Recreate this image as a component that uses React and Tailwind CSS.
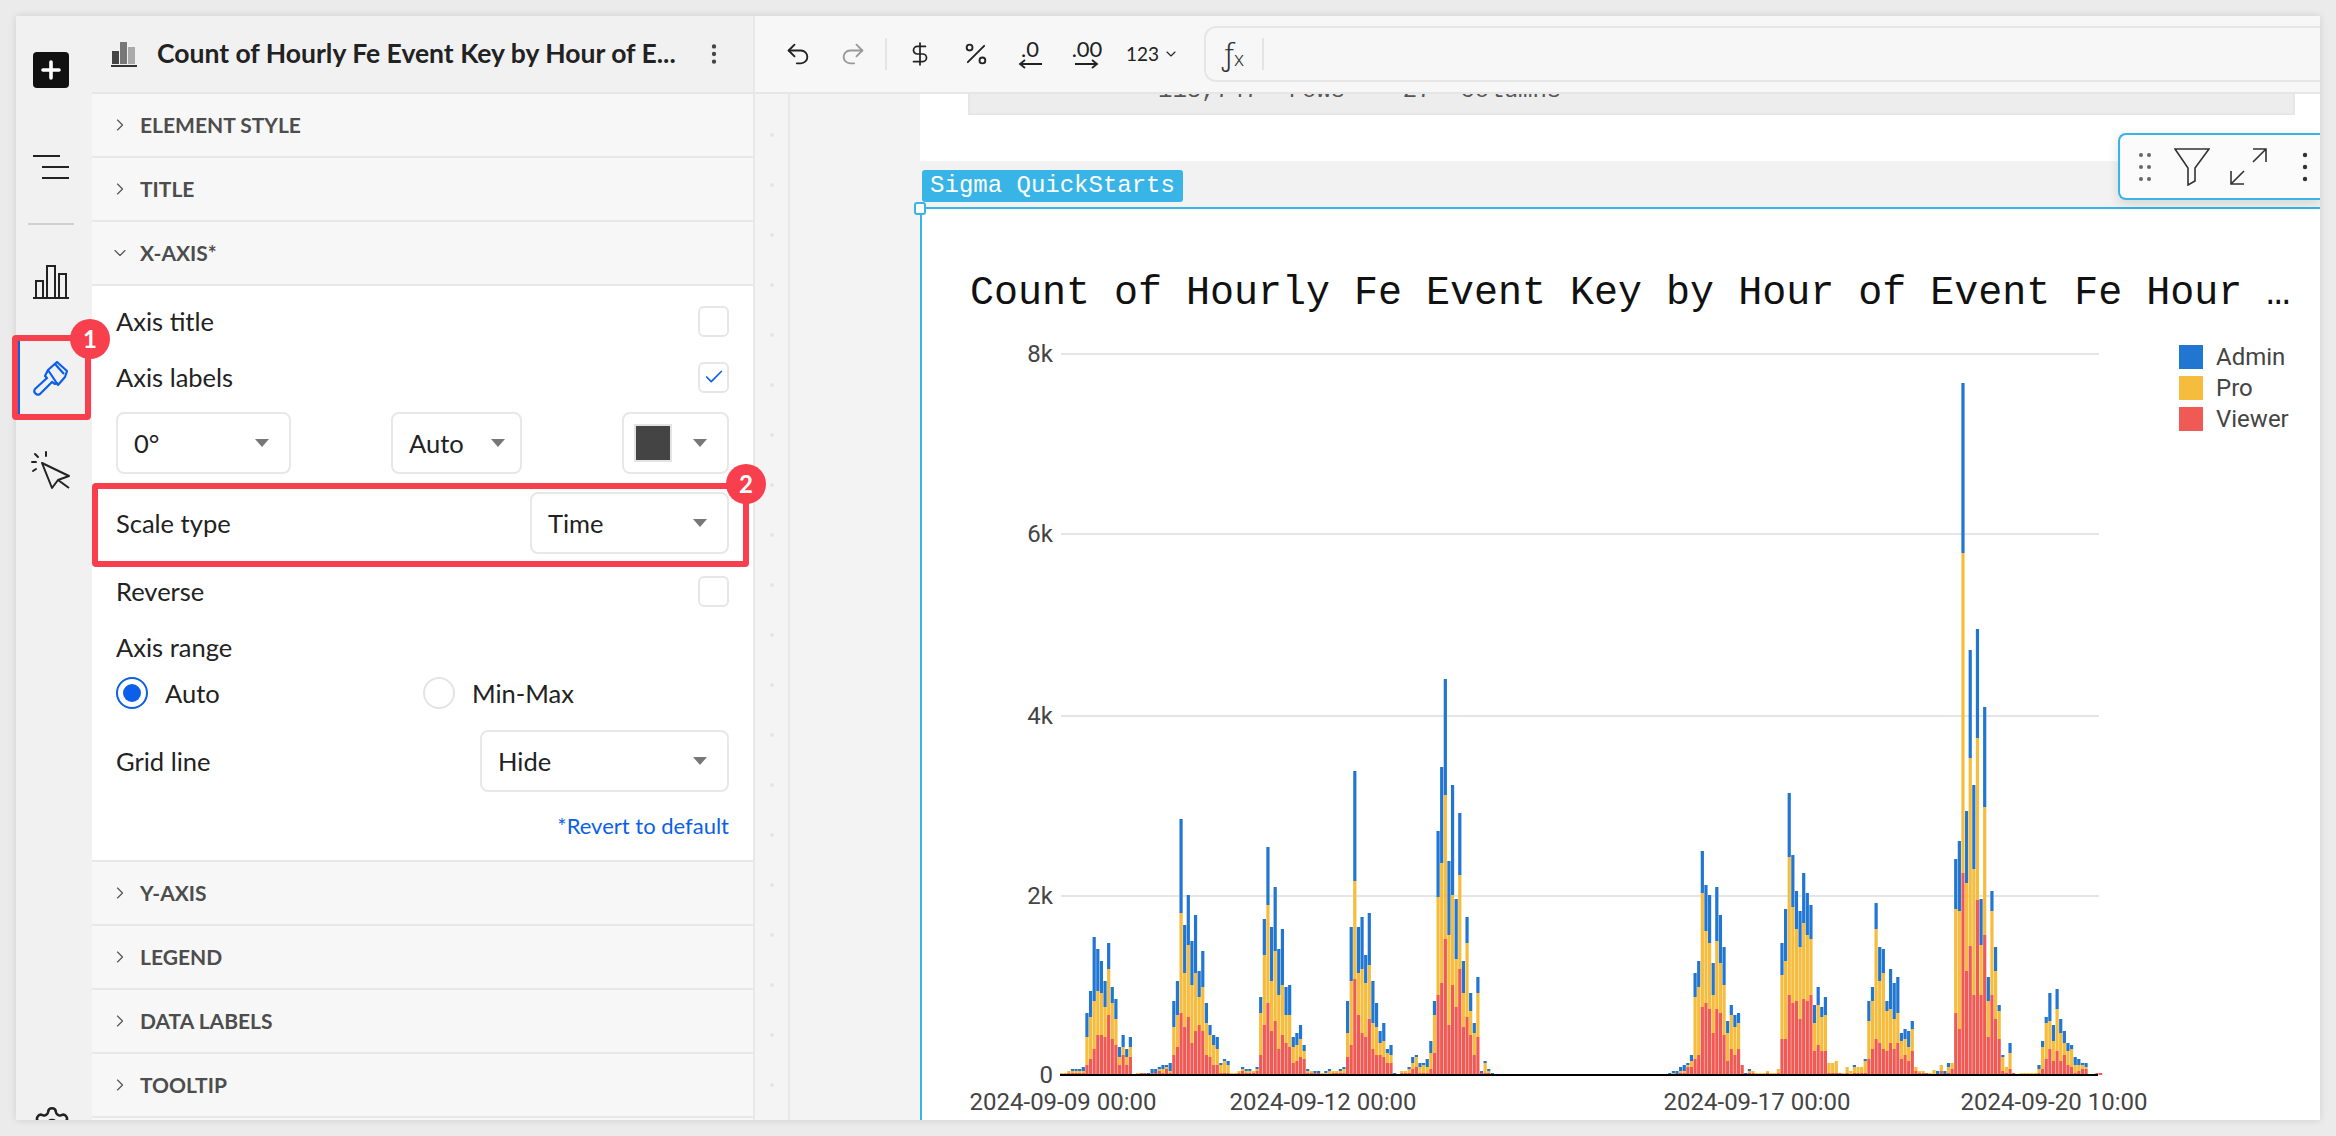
import { Undo2, Redo2, DollarSign, Percent, ChevronRight, ChevronDown, Settings, Check, EllipsisVertical } from "lucide-react";

// [red top, yellow top, blue top] in px above the axis, one entry per hour
const HOURS_A = [
    [0,2,2],[0,2,2],[2,4,4],[2,4,6],[2,4,6],[2,4,6],[2,4,8],[10,38,62],[16,58,84],[26,74,138],
    [40,84,126],[40,82,114],[38,68,94],[60,106,132],[36,72,88],[30,56,76],[10,18,28],[20,28,40],[10,18,26],[18,28,38],
    [0,0,0],[0,2,2],[2,2,2],[2,2,2],[0,0,2],[2,2,6],[2,2,6],[4,6,8],[2,6,10],[6,8,10],
    [2,4,12],[20,48,74],[28,60,94],[62,162,256],[48,102,150],[58,130,180],[32,90,134],[44,102,160],[50,78,104],[44,88,124],
    [20,52,72],[18,40,50],[10,30,40],[10,26,38],[2,10,12],[2,14,16],[2,10,14],[0,2,2],[0,2,2],[2,4,4],
    [4,6,8],[2,4,6],[2,4,6],[2,4,4],[4,6,8],[20,62,78],[50,120,156],[72,170,228],[44,94,148],[54,124,188],
    [26,80,126],[40,90,146],[32,60,88],[28,60,90],[12,28,38],[14,30,42],[18,36,50],[16,24,30],[2,4,6],[2,4,4],
    [2,2,4],[2,2,4],[0,2,2],[0,2,4],[0,4,6],[2,4,4],[2,4,4],[2,4,6],[2,6,8],[18,42,74],
    [30,94,148],[96,194,304],[60,102,148],[42,106,158],[38,92,120],[56,110,162],[26,52,94],[20,48,72],[20,32,44],[18,34,52],
    [12,22,26],[12,20,30],[0,0,2],[0,0,0],[2,4,4],[2,4,4],[2,6,8],[6,12,18],[8,18,20],[2,8,12],
    [2,10,12],[2,8,16],[6,22,34],[22,60,74],[80,178,244],[92,212,308],[136,280,396],[50,140,214],[90,180,290],[68,116,176],
    [106,200,262],[48,82,114],[58,132,158],[40,64,82],[20,42,52],[38,82,98],[2,2,4],[2,12,14],[2,4,6],[0,0,2],
];

const HOURS_B = [
    [0,0,2],[0,2,4],[0,0,4],[2,4,8],[2,4,10],[8,10,12],[8,14,20],[16,78,102],[20,88,114],[68,182,224],
    [72,144,190],[66,132,180],[42,80,112],[66,134,188],[62,112,160],[40,90,128],[14,42,54],[26,60,70],[20,48,60],[26,52,62],
    [10,10,10],[0,0,2],[2,4,6],[2,4,4],[0,2,2],[0,2,2],[0,2,2],[2,4,4],[0,2,2],[0,2,2],
    [2,6,6],[36,100,132],[36,114,166],[80,218,282],[72,168,220],[74,146,184],[56,128,164],[76,152,202],[74,140,182],[80,136,170],
    [24,52,70],[30,70,88],[24,58,68],[24,60,78],[2,12,12],[2,12,12],[2,14,14],[2,2,2],[0,2,2],[2,8,8],
    [0,4,4],[2,8,10],[2,8,8],[2,8,8],[2,14,16],[16,54,74],[26,74,88],[36,146,172],[32,94,128],[26,102,126],
    [24,64,74],[32,66,106],[26,56,92],[32,62,98],[16,34,42],[20,36,46],[14,28,44],[24,46,54],[4,8,8],[2,4,4],
    [2,4,4],[2,2,2],[0,2,2],[0,5,5],[0,0,4],[4,10,10],[0,0,4],[2,8,12],[6,12,12],[62,166,216],
    [46,164,234],[202,522,692],[104,192,264],[129,317,425],[80,206,290],[175,337,446],[80,130,176],[140,268,368],[38,74,98],[80,164,184],
    [56,104,128],[36,64,70],[4,18,20],[2,8,8],[6,22,32],[2,2,2],[0,0,0],[0,2,2],[0,2,2],[0,2,2],
    [0,2,2],[0,2,2],[2,6,10],[6,28,34],[16,52,58],[26,54,82],[14,34,50],[24,66,86],[14,42,56],[20,32,44],
    [10,24,32],[8,26,30],[2,10,18],[4,10,16],[6,10,12],[6,8,12],[0,0,0],[0,0,0],[2,2,2],[2,2,2],
];

const AXIS_Y = 1075;
const hourX = (i) => 1060 + 3.62 * i;

function Bar({ i, hour }) {
    const [r, y, b] = hour;
    const x = hourX(i);
    return (
        <g>
            {b > y && <rect x={x} y={AXIS_Y - b} width="3.2" height={b - y} fill="#2176d2" />}
            {y > r && <rect x={x} y={AXIS_Y - y} width="3.2" height={y - r} fill="#f6bc3d" />}
            {r > 0 && <rect x={x} y={AXIS_Y - r} width="3.2" height={r} fill="#ef5a55" />}
        </g>
    );
}

function Chart() {
    return (
        <svg viewBox="922 340 1240 780" className="h-[780px] w-[1240px] shrink-0 [font-family:Roboto,sans-serif]">
            {[354, 534, 716, 896].map((y) => (
                <rect key={y} x="1061" y={y - 1} width="1038" height="2" fill="#e5e5e5" />
            ))}
            {HOURS_A.map((h, i) => <Bar key={i} i={i} hour={h} />)}
            {HOURS_B.map((h, i) => <Bar key={i} i={i + 168} hour={h} />)}
            <rect x="1060" y="1074" width="1038" height="2" fill="#000" />
            <g fontSize="24" fill="#444" textAnchor="end">
                <text x="1053" y="362">8k</text>
                <text x="1053" y="542">6k</text>
                <text x="1053" y="724">4k</text>
                <text x="1053" y="904">2k</text>
                <text x="1053" y="1083">0</text>
            </g>
            <g fontSize="24" fill="#444" textAnchor="middle">
                <text x="1063" y="1110">2024-09-09 00:00</text>
                <text x="1323" y="1110">2024-09-12 00:00</text>
                <text x="1757" y="1110">2024-09-17 00:00</text>
                <text x="2054" y="1110">2024-09-20 10:00</text>
            </g>
        </svg>
    );
}

function Caret() {
    return (
        <svg viewBox="0 0 14 8" className="h-2 w-3.5 shrink-0">
            <path d="M0 0h14L7 8z" fill="#777" />
        </svg>
    );
}

function Section({ label, open }) {
    return (
        <div className="flex h-16 shrink-0 items-center border-b-2 border-[#e8e8e8] bg-[#f7f7f7] pl-[18px]">
            {open ? (
                <ChevronDown size={20} strokeWidth={1.4} className="text-[#555]" />
            ) : (
                <ChevronRight size={20} strokeWidth={1.4} className="text-[#555]" />
            )}
            <span className="ml-[10px] text-[21px] font-bold text-[#4d4d4d]">{label}</span>
        </div>
    );
}

function Checkbox({ checked }) {
    return (
        <div className="flex h-[31px] w-[31px] items-center justify-center rounded-md border-2 border-[#e6e6e6] bg-white">
            {checked && <Check size={22} strokeWidth={1.8} className="text-[#0b5fe8]" />}
        </div>
    );
}

function Select({ width, text }) {
    return (
        <div className={`flex h-[62px] items-center justify-between rounded-lg border-2 border-[#e8e8e8] bg-white pl-4 pr-[20px] ${width}`}>
            <span>{text}</span>
            <Caret />
        </div>
    );
}

function Radio({ on, label, className = "" }) {
    return (
        <div className={`flex items-center gap-[17px] ${className}`}>
            <div className={`flex h-8 w-8 items-center justify-center rounded-full border-2 bg-white ${on ? "border-[#0b5fe8]" : "border-[#e4e4e4]"}`}>
                {on && <div className="h-[18px] w-[18px] rounded-full bg-[#0b5fe8]" />}
            </div>
            <span>{label}</span>
        </div>
    );
}

function XAxisBody() {
    return (
        <div className="flex h-[576px] shrink-0 flex-col border-b-2 border-[#e8e8e8] bg-white px-6 pt-[7px] text-[25.5px] text-[#222]">
            <div className="flex h-14 shrink-0 items-center justify-between">
                <span>Axis title</span>
                <Checkbox />
            </div>
            <div className="flex h-14 shrink-0 items-center justify-between">
                <span>Axis labels</span>
                <Checkbox checked />
            </div>
            <div className="mt-[7px] flex shrink-0 items-center justify-between">
                <Select width="w-[175px]" text="0°" />
                <div className="flex h-[62px] w-[131px] items-center justify-between rounded-lg border-2 border-[#e8e8e8] pl-4 pr-[15px]">
                    <span>Auto</span>
                    <Caret />
                </div>
                <div className="flex h-[62px] w-[107px] items-center justify-between rounded-lg border-2 border-[#e8e8e8] pl-[10px] pr-[20px]">
                    <div className="h-[38px] w-[38px] border-2 border-[#e4e4e4] bg-[#444]" />
                    <Caret />
                </div>
            </div>
            <div className="mt-[18px] flex shrink-0 items-center justify-between">
                <span>Scale type</span>
                <Select width="w-[199px]" text="Time" />
            </div>
            <div className="mt-[9px] flex h-14 shrink-0 items-center justify-between">
                <span>Reverse</span>
                <Checkbox />
            </div>
            <div className="mt-[3px] flex h-[50px] shrink-0 items-center">Axis range</div>
            <div className="flex h-[42px] shrink-0 items-center">
                <Radio on label="Auto" className="w-[307px]" />
                <Radio label="Min-Max" />
            </div>
            <div className="mt-4 flex shrink-0 items-center justify-between">
                <span>Grid line</span>
                <Select width="w-[249px]" text="Hide" />
            </div>
            <div className="mt-[17px] h-[34px] shrink-0 text-right text-[22px] leading-[34px] text-[#0b5fe8]">*Revert to default</div>
        </div>
    );
}

function SidePanel() {
    return (
        <div className="flex w-[663px] shrink-0 flex-col overflow-hidden border-r-2 border-[#e8e8e8] [font-family:Lato,sans-serif]">
            <div className="flex h-[78px] shrink-0 items-center border-b-2 border-[#e6e6e6] bg-[#f1f1f1] pl-[19px]">
                <svg viewBox="0 0 27 26" className="h-[26px] w-[27px] shrink-0">
                    <rect x="1" y="10" width="7" height="13" fill="#444" />
                    <rect x="9" y="1" width="7" height="22" fill="#777" />
                    <rect x="17" y="6" width="7" height="17" fill="#aaa" />
                    <rect x="0" y="24" width="26" height="2" fill="#333" />
                </svg>
                <span className="ml-[19px] w-[546px] shrink-0 whitespace-nowrap text-[26.5px] font-bold text-[#222]">Count of Hourly Fe Event Key by Hour of E...</span>
                <EllipsisVertical size={26} strokeWidth={2} className="ml-[-2px] shrink-0 text-[#444]" />
            </div>
            <Section label="ELEMENT STYLE" />
            <Section label="TITLE" />
            <Section label="X-AXIS*" open />
            <XAxisBody />
            <Section label="Y-AXIS" />
            <Section label="LEGEND" />
            <Section label="DATA LABELS" />
            <Section label="TOOLTIP" />
            <Section label="" />
        </div>
    );
}

function Rail() {
    return (
        <div className="flex w-[76px] shrink-0 flex-col overflow-hidden bg-[#f1f1f1]">
            <div className="ml-[17px] mt-9 flex h-9 w-9 items-center justify-center rounded-[4px] bg-[#111]">
                <svg viewBox="0 0 20 20" className="h-5 w-5">
                    <path d="M10 2v16M2 10h16" stroke="#fff" strokeWidth="3.6" strokeLinecap="round" />
                </svg>
            </div>
            <svg viewBox="0 0 36 26" className="ml-[17px] mt-[66px] h-[26px] w-9 shrink-0">
                <path d="M0 2h27M9 13h27M9 24h27" stroke="#222" strokeWidth="2.2" />
            </svg>
            <div className="ml-3 mt-[43px] h-0.5 w-[46px] bg-[#cfcfcf]" />
            <svg viewBox="0 0 36 34" className="ml-[17px] mt-[40px] h-[34px] w-9 shrink-0" fill="none" stroke="#222" strokeWidth="2">
                <path d="M0 33h36M3 32V16h7v16M14 32V1h8v31M26 32V9h7v23" />
            </svg>
            <div className="relative mt-[37px] flex h-[85px] shrink-0 items-center pl-4">
                <div className="absolute bottom-1 left-0.5 top-1 w-0.5 bg-[#0b5fe8]" />
                <svg viewBox="0 0 36 36" className="h-[36px] w-[36px]" fill="none" stroke="#0b5fe8" strokeWidth="2.2" strokeLinejoin="round">
                    <path d="M16 9 25 1l10 9-2 6-7 8z" />
                    <path d="M23 3l9 10" />
                    <path d="M16 9l-3 6 2 2L3 28a3.6 3.6 0 0 0 5 5l12-12 3 2 3-1" />
                </svg>
            </div>
            <svg viewBox="0 0 42 40" className="ml-[14px] mt-[30px] h-10 w-[42px] shrink-0" fill="none" stroke="#222" strokeWidth="2" strokeLinejoin="round">
                <path d="M12 12 39 25l-11 4-6 8z" />
                <path d="M28 29l11 8" />
                <path d="M16 1v4M5 3l3 3M2 11h4M3 20l3-2" strokeLinecap="round" />
            </svg>
            <Settings size={40} strokeWidth={1.5} className="mb-[-25px] ml-[16px] mt-auto shrink-0 text-[#222]" />
        </div>
    );
}

function Toolbar() {
    return (
        <div className="flex h-[78px] shrink-0 items-center border-b-2 border-[#e6e6e6] bg-[#f7f7f7] text-[#222] [font-family:Lato,sans-serif]">
            <Undo2 size={28} strokeWidth={1.6} className="ml-[29px]" />
            <Redo2 size={28} strokeWidth={1.6} className="ml-[27px] text-[#999]" />
            <div className="ml-[18px] h-8 w-0.5 bg-[#e4e4e4]" />
            <DollarSign size={26} strokeWidth={1.6} className="ml-[20px]" />
            <Percent size={28} strokeWidth={1.6} className="ml-[29px]" />
            <div className="ml-[25px] flex w-[30px] flex-col items-center text-[22px] leading-[20px]">
                <span>.0</span>
                <svg viewBox="0 0 24 10" className="h-2.5 w-6" fill="none" stroke="#222" strokeWidth="1.8">
                    <path d="M24 5H2M7 1 2 5l5 4" />
                </svg>
            </div>
            <div className="ml-[26px] flex w-[32px] flex-col items-center text-[22px] leading-[20px]">
                <span>.00</span>
                <svg viewBox="0 0 24 10" className="h-2.5 w-6" fill="none" stroke="#222" strokeWidth="1.8">
                    <path d="M0 5h22M17 1l5 4-5 4" />
                </svg>
            </div>
            <span className="ml-[23px] text-[19px]">123</span>
            <ChevronDown size={16} strokeWidth={1.6} className="ml-1" />
            <div className="ml-[25px] flex h-14 flex-1 items-center rounded-l-xl border-y-2 border-l-2 border-[#e6e6e6]">
                <span className="ml-4 flex w-[40px] items-end [font-family:'Noto_Sans',sans-serif] font-light text-[#333]">
                    <span className="text-[30px] leading-[40px]">ƒ</span>
                    <span className="text-[20px] leading-[30px]">x</span>
                </span>
                <div className="h-8 w-0.5 bg-[#e4e4e4]" />
            </div>
        </div>
    );
}

function FloatingTools() {
    return (
        <div className="absolute right-0 top-[39px] flex h-[67px] w-[202px] items-center rounded-l-lg border-y-2 border-l-2 border-[#38b5e6] bg-[#fbfbfb] shadow-[0_4px_12px_rgba(0,0,0,0.12)]">
            <svg viewBox="0 0 12 28" className="ml-[19px] h-7 w-3" fill="#666">
                <circle cx="2" cy="2" r="2" /><circle cx="10" cy="2" r="2" />
                <circle cx="2" cy="14" r="2" /><circle cx="10" cy="14" r="2" />
                <circle cx="2" cy="26" r="2" /><circle cx="10" cy="26" r="2" />
            </svg>
            <svg viewBox="0 0 36 38" className="ml-[23px] h-[38px] w-9" fill="none" stroke="#333" strokeWidth="1.6">
                <path d="M1 1h34L21 20v13l-7 4V20z" />
            </svg>
            <svg viewBox="0 0 37 37" className="ml-[20px] h-[37px] w-[37px]" fill="none" stroke="#333" strokeWidth="1.6">
                <path d="M1 36l13-13M1 23v13h13M36 1 23 14M23 1h13v13" />
            </svg>
            <svg viewBox="0 0 6 30" className="ml-[35px] h-[30px] w-1.5" fill="#333">
                <circle cx="3" cy="3" r="2.2" /><circle cx="3" cy="15" r="2.2" /><circle cx="3" cy="27" r="2.2" />
            </svg>
        </div>
    );
}

function Legend() {
    const items = [["Admin", "bg-[#2176d2]"], ["Pro", "bg-[#f6bc3d]"], ["Viewer", "bg-[#ef5a55]"]];
    return (
        <div className="ml-[17px] mt-[5px] flex flex-col gap-[7px] [font-family:Roboto,sans-serif] text-[24px] leading-6 text-[#444]">
            {items.map(([name, color]) => (
                <div key={name} className="flex items-center gap-[13px]">
                    <div className={`h-6 w-6 ${color}`} />
                    <span>{name}</span>
                </div>
            ))}
        </div>
    );
}

function Canvas() {
    return (
        <div className="relative flex min-w-0 flex-1 flex-col bg-white [font-family:'Liberation_Mono',monospace]">
            <div className="h-[67px] shrink-0">
                <div className="ml-12 mr-[25px] h-[21px] overflow-hidden border-x-2 border-b-2 border-[#e6e6e6] bg-[#ededed] pl-[188px] text-[24px] leading-[30px] text-[#555]">
                    <div className="-mt-[18px] whitespace-pre">118,747  rows    27  columns</div>
                </div>
            </div>
            <div className="h-[46px] shrink-0 bg-[#f2f2f2] pl-0.5 pt-[9px]">
                <span className="block h-8 w-[261px] rounded-[3px] bg-[#38b5e6] text-center text-[24px] leading-8 text-white">Sigma QuickStarts</span>
            </div>
            <div className="relative flex-1 border-l-2 border-t-2 border-[#38b5e6] text-[#111]">
                <div className="absolute -left-[8px] -top-[7px] h-[13px] w-3 rounded-[3px] border-2 border-[#38b5e6] bg-white" />
                <div className="h-[108px] whitespace-nowrap pl-[48px] pt-[61px] text-[40px] leading-[48px]">Count of Hourly Fe Event Key by Hour of Event Fe Hour …</div>
                <div className="mt-[23px] flex">
                    <Chart />
                    <Legend />
                </div>
            </div>
            <FloatingTools />
        </div>
    );
}

export default function App() {
    return (
        <div className="relative h-screen w-screen overflow-hidden bg-[#ebebeb] p-4">
            <div className="flex h-full overflow-hidden bg-white shadow-[0_0_8px_rgba(0,0,0,0.12)]">
                <Rail />
                <SidePanel />
                <div className="flex min-w-0 flex-1 flex-col">
                    <Toolbar />
                    <div className="flex min-h-0 flex-1">
                        <div className="flex w-[35px] shrink-0 flex-col items-center gap-[46px] border-r-2 border-[#e8e8e8] bg-[#f4f4f4] pt-[39px]">
                            {Array.from({ length: 20 }).map((_, i) => (
                                <div key={i} className="h-1 w-1 shrink-0 rounded-full bg-[#e4e4e4]" />
                            ))}
                        </div>
                        <div className="w-[130px] shrink-0 bg-[#f3f3f3]" />
                        <Canvas />
                    </div>
                </div>
            </div>

            {/* Red call-outs sit over the UI */}
            <div className="absolute left-3 top-[335px] h-[85px] w-[79px] rounded-sm border-[6px] border-[#f83f4d]" />
            <div className="absolute left-[92px] top-[483px] h-[84px] w-[657px] rounded-sm border-[6px] border-[#f83f4d]" />
            <div className="absolute left-[70px] top-[319px] flex h-10 w-10 items-center justify-center rounded-full bg-[#f83f4d] [font-family:Lato,sans-serif] text-[24px] font-bold text-white">1</div>
            <div className="absolute left-[726px] top-[464px] flex h-10 w-10 items-center justify-center rounded-full bg-[#f83f4d] [font-family:Lato,sans-serif] text-[24px] font-bold text-white">2</div>
        </div>
    );
}
